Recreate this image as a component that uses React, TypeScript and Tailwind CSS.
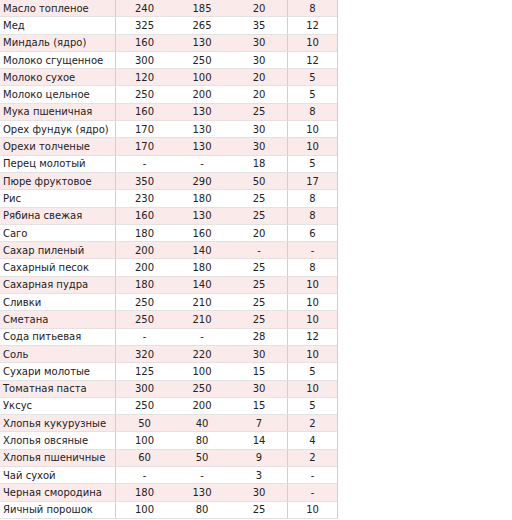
const rows: [string, string, string, string, string][] = [
  ["Масло топленое", "240", "185", "20", "8"],
  ["Мед", "325", "265", "35", "12"],
  ["Миндаль (ядро)", "160", "130", "30", "10"],
  ["Молоко сгущенное", "300", "250", "30", "12"],
  ["Молоко сухое", "120", "100", "20", "5"],
  ["Молоко цельное", "250", "200", "20", "5"],
  ["Мука пшеничная", "160", "130", "25", "8"],
  ["Орех фундук (ядро)", "170", "130", "30", "10"],
  ["Орехи толченые", "170", "130", "30", "10"],
  ["Перец молотый", "-", "-", "18", "5"],
  ["Пюре фруктовое", "350", "290", "50", "17"],
  ["Рис", "230", "180", "25", "8"],
  ["Рябина свежая", "160", "130", "25", "8"],
  ["Саго", "180", "160", "20", "6"],
  ["Сахар пиленый", "200", "140", "-", "-"],
  ["Сахарный песок", "200", "180", "25", "8"],
  ["Сахарная пудра", "180", "140", "25", "10"],
  ["Сливки", "250", "210", "25", "10"],
  ["Сметана", "250", "210", "25", "10"],
  ["Сода питьевая", "-", "-", "28", "12"],
  ["Соль", "320", "220", "30", "10"],
  ["Сухари молотые", "125", "100", "15", "5"],
  ["Томатная паста", "300", "250", "30", "10"],
  ["Уксус", "250", "200", "15", "5"],
  ["Хлопья кукурузные", "50", "40", "7", "2"],
  ["Хлопья овсяные", "100", "80", "14", "4"],
  ["Хлопья пшеничные", "60", "50", "9", "2"],
  ["Чай сухой", "-", "-", "3", "-"],
  ["Черная смородина", "180", "130", "30", "-"],
  ["Яичный порошок", "100", "80", "25", "10"],
]

export default function App() {
  return (
    <div className="w-[512px] h-[520px] bg-white overflow-hidden font-['DejaVu_Sans',sans-serif] text-[10px] text-[#222]">
      <div className="w-[338px] border-r border-[#cfcfcf]">
        {rows.map((r, i) => (
          <div
            key={r[0]}
            className={`grid grid-cols-[116px_57px_58px_57px_49px] h-[17.3px] box-border border-b border-[#e2e2e2] ${i % 2 === 0 ? "bg-[#fbeaea]" : "bg-white"}`}
          >
            <div className="flex items-center pl-[3px] border-r border-[#cfcfcf] whitespace-nowrap">{r[0]}</div>
            <div className="flex items-center justify-center">{r[1]}</div>
            <div className="flex items-center justify-center">{r[2]}</div>
            <div className="flex items-center justify-center border-r border-[#cfcfcf]">{r[3]}</div>
            <div className="flex items-center justify-center">{r[4]}</div>
          </div>
        ))}
      </div>
    </div>
  )
}
